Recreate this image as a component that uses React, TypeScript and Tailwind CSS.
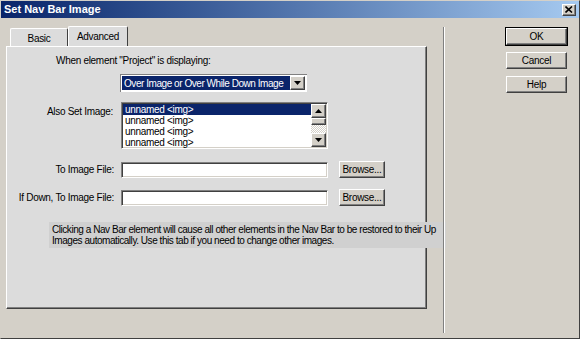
import React from "react";

const raised =
  "border border-t-white border-l-white border-r-[#404040] border-b-[#404040] shadow-[inset_-1px_-1px_0_#808080,inset_1px_1px_0_#d4d0c8]";
const sunken =
  "border border-t-[#808080] border-l-[#808080] border-r-white border-b-white shadow-[inset_1px_1px_0_#404040,inset_-1px_-1px_0_#d4d0c8]";

function Arrow({ up }: { up?: boolean }) {
  return (
    <svg width="7" height="4" viewBox="0 0 7 4">
      {up ? <path d="M3.5 0 L7 4 L0 4 Z" fill="#000" /> : <path d="M0 0 L7 0 L3.5 4 Z" fill="#000" />}
    </svg>
  );
}

function SmallBtn({ children, className = "" }: { children?: React.ReactNode; className?: string }) {
  return (
    <div className={`flex items-center justify-center bg-[#d4d0c8] ${raised} ${className}`}>
      {children}
    </div>
  );
}

function DialogButton({ label, isDefault }: { label: string; isDefault?: boolean }) {
  return (
    <div className={isDefault ? "border border-black" : "border border-transparent"}>
      <div className={`flex h-[17px] w-[61px] items-center justify-center bg-[#d4d0c8] ${raised}`}>
        {label}
      </div>
    </div>
  );
}

function FileRow({ label }: { label: string }) {
  return (
    <div className="flex items-center">
      <div className="w-[107px] whitespace-nowrap text-right">{label}</div>
      <div className={`ml-[7px] h-[16px] w-[207px] bg-white ${sunken}`} />
      <SmallBtn className="ml-[11px] h-[17px] w-[46px]">Browse...</SmallBtn>
    </div>
  );
}

export default function App() {
  return (
    <div className="flex h-[339px] w-[580px] flex-col border border-t-[#d4d0c8] border-l-[#d4d0c8] border-r-[#404040] border-b-[#404040] bg-[#d4d0c8] font-['Liberation_Sans',Arial,sans-serif] text-[10px] tracking-[-0.3px] text-black">
      {/* title bar */}
      <div className="flex h-[17px] items-center justify-between bg-gradient-to-r from-[#0a246a] to-[#a6caf0] pl-[3px] pr-[3px]">
        <span className="text-[11px] font-bold tracking-[0px] text-white">Set Nav Bar Image</span>
        <SmallBtn className="h-[12px] w-[14px]">
          <svg width="8" height="7" viewBox="0 0 8 7">
            <path d="M0.5 0.5 L7 6.5 M7 0.5 L0.5 6.5" stroke="#000" strokeWidth="1.6" />
          </svg>
        </SmallBtn>
      </div>

      <div className="flex flex-1">
        {/* left: tabs + panel */}
        <div className="ml-[5px] mt-[7px] flex flex-col">
          <div className="flex h-[21px] items-end">
            <div className="ml-[4px] flex h-[18px] w-[58px] items-center justify-center rounded-t-[2px] border-l border-t border-r border-t-white border-l-white border-r-[#404040] bg-[#dcdcdc] pt-[1px]">
              Basic
            </div>
            <div className="-mb-px flex h-[21px] w-[60px] items-center justify-center rounded-t-[2px] border-l border-t border-r border-t-white border-l-white border-r-[#404040] bg-[#dcdcdc] pb-[1px]">
              Advanced
            </div>
          </div>
          <div className="h-[263px] w-[421px] border border-t-white border-l-white border-r-[#404040] border-b-[#404040] bg-[#dcdcdc] shadow-[inset_-1px_-1px_0_#808080]">
            <div className="ml-[49px] mt-[8px] whitespace-nowrap leading-[12px]">When element "Project" is displaying:</div>

            <div className="ml-[113px] mt-[7px] flex h-[18px] w-[187px] items-center bg-white p-[2px] shadow-[inset_1px_1px_0_#808080,inset_-1px_-1px_0_#ffffff]">
              <div className="flex h-[14px] flex-1 items-center overflow-hidden whitespace-nowrap bg-[#0a246a] pl-[2px] tracking-[-0.45px] text-white">
                Over Image or Over While Down Image
              </div>
              <SmallBtn className="h-[14px] w-[15px]">
                <Arrow />
              </SmallBtn>
            </div>

            <div className="mt-[10px] flex">
              <div className="w-[106px] whitespace-nowrap pt-[2px] text-right">Also Set Image:</div>
              <div className={`ml-[8px] flex h-[47px] w-[207px] bg-white ${sunken} p-[1px]`}>
                <div className="flex flex-1 flex-col whitespace-nowrap leading-[11px]">
                  <div className="bg-[#0a246a] pl-[2px] text-white">unnamed &lt;img&gt;</div>
                  <div className="pl-[2px]">unnamed &lt;img&gt;</div>
                  <div className="pl-[2px]">unnamed &lt;img&gt;</div>
                  <div className="pl-[2px]">unnamed &lt;img&gt;</div>
                </div>
                <div className="flex w-[15px] flex-col bg-[repeating-conic-gradient(#ffffff_0_25%,#d4d0c8_0_50%)] bg-[length:2px_2px]">
                  <SmallBtn className="h-[14px] w-[15px]">
                    <Arrow up />
                  </SmallBtn>
                  <SmallBtn className="h-[7px] w-[15px]" />
                  <div className="flex-1" />
                  <SmallBtn className="h-[14px] w-[15px]">
                    <Arrow />
                  </SmallBtn>
                </div>
              </div>
            </div>

            <div className="mt-[12px]">
              <FileRow label="To Image File:" />
            </div>
            <div className="mt-[11px]">
              <FileRow label="If Down, To Image File:" />
            </div>

            <div className="ml-[42px] mt-[16px] w-[397px] bg-[#d0d0d0] px-[3px] py-[2px] leading-[11px] tracking-[-0.45px]">
              <div className="whitespace-nowrap">
                Clicking a Nav Bar element will cause all other elements in the Nav Bar to be restored to their Up
              </div>
              <div className="whitespace-nowrap">
                Images automatically. Use this tab if you need to change other images.
              </div>
            </div>
          </div>
        </div>

        {/* separator */}
        <div className="ml-[16px] mt-[9px] mb-[5px] w-[2px] border-l border-r border-l-[#808080] border-r-white" />

        {/* buttons */}
        <div className="ml-[60px] mt-[9px] flex flex-col gap-[5px]">
          <DialogButton label="OK" isDefault />
          <DialogButton label="Cancel" />
          <DialogButton label="Help" />
        </div>
      </div>
    </div>
  );
}
